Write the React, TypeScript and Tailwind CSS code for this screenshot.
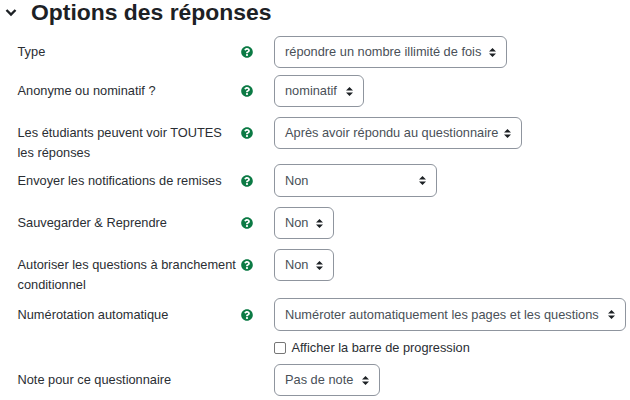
import type { ReactNode } from 'react';

function HelpIcon() {
  return (
    <svg viewBox="0 0 512 512" className="h-[12px] w-[12px] fill-[#0b7a44]">
      <path d="M504 256c0 137-111 248-248 248S8 393 8 256 119 8 256 8s248 111 248 248zM262.700 90c-54.500 0-89.200 23-116.500 63.700-3.500 5.300-2.400 12.400 2.700 16.200l34.700 26.300c5.200 3.900 12.600 3 16.700-2.100 17.900-22.700 30.100-35.800 57.300-35.800 20.400 0 45.700 13.100 45.700 33 0 15-12.400 22.700-32.600 34-23.600 13.200-54.800 29.700-54.800 70.900V300c0 6.600 5.400 12 12 12h56c6.600 0 12-5.400 12-12v-1.300c0-28.600 83.500-29.800 83.500-107.200C380 133.200 319.600 90 262.700 90zM256 339c-25.500 0-46.200 20.700-46.200 46.200 0 25.500 20.700 46.200 46.200 46.200s46.200-20.700 46.200-46.200c0-25.500-20.700-46.200-46.200-46.200z" />
    </svg>
  );
}

function Caret() {
  return (
    <svg viewBox="0.700 0.500 8.600 11" className="h-[9px] w-[7px] shrink-0 fill-[#1d2125]">
      <path d="M5 0.500 9.300 4.800H0.700zM5 11.500 0.700 7.200H9.300z" />
    </svg>
  );
}

function Select({ children, className }: { children: ReactNode; className: string }) {
  return (
    <div className={`flex items-center justify-between rounded-[6px] border border-[#8f959e] bg-white pl-[10px] pr-[10px] text-[#495057] ${className}`}>
      <span className="whitespace-nowrap">{children}</span>
      <Caret />
    </div>
  );
}

function Row({ label, children, className, tall }: { label: ReactNode; children: ReactNode; className: string; tall?: boolean }) {
  return (
    <div className={`flex items-start ${className}`}>
      <div className={`w-[223.500px] shrink-0 leading-[20px] ${tall ? 'pt-[7px]' : 'pt-[6px]'}`}>{label}</div>
      <div className={`flex w-[33px] shrink-0 items-center ${tall ? 'h-[33px]' : 'h-[32px]'}`}>
        <HelpIcon />
      </div>
      {children}
    </div>
  );
}

export default function App() {
  return (
    <div className="h-[400px] w-[630px] overflow-hidden bg-white font-['Liberation_Sans',Arial,sans-serif] text-[12.800px] text-[#2a2e33]">
      <div className="flex h-[24px] items-center pl-[5px]">
        <svg viewBox="0 0 12 12" className="h-[12px] w-[12px] fill-none stroke-[#1d2125] stroke-[2.400]">
          <path d="M1.500 4 6 8.500 10.500 4" />
        </svg>
        <h2 className="ml-[14px] text-[22.900px] font-bold leading-[24px] text-[#1d2125]">Options des réponses</h2>
      </div>
      <div className="pl-[17.500px] pt-[12px]">
        <Row label="Type" className="mb-[7px]">
          <Select className="h-[32px] w-[233px]">répondre un nombre illimité de fois</Select>
        </Row>
        <Row label="Anonyme ou nominatif ?" className="mb-[10px]">
          <Select className="h-[32px] w-[90px]">nominatif</Select>
        </Row>
        <Row label={<>Les étudiants peuvent voir TOUTES<br />les réponses</>} className="mb-[1px]">
          <Select className="h-[32px] w-[248px]">Après avoir répondu au questionnaire</Select>
        </Row>
        <Row tall label="Envoyer les notifications de remises" className="mb-[10px]">
          <Select className="h-[33px] w-[163px]">Non</Select>
        </Row>
        <Row label="Sauvegarder & Reprendre" className="mb-[10px]">
          <Select className="h-[32px] w-[60px]">Non</Select>
        </Row>
        <Row label={<>Autoriser les questions à branchement<br />conditionnel</>} className="mb-[3px]">
          <Select className="h-[32px] w-[60px]">Non</Select>
        </Row>
        <Row tall label="Numérotation automatique" className="mb-[8px]">
          <Select className="h-[33px] w-[352px]">Numéroter automatiquement les pages et les questions</Select>
        </Row>
        <div className="mb-[7px] ml-[256.500px] flex h-[18px] items-center gap-[5.500px]">
          <span className="h-[12px] w-[12px] rounded-[2px] border border-[#767676] bg-white" />
          <span>Afficher la barre de progression</span>
        </div>
        <div className="flex items-start">
          <div className="w-[256.500px] shrink-0 pt-[6px] leading-[20px]">Note pour ce questionnaire</div>
          <Select className="h-[32px] w-[106px]">Pas de note</Select>
        </div>
      </div>
    </div>
  );
}
